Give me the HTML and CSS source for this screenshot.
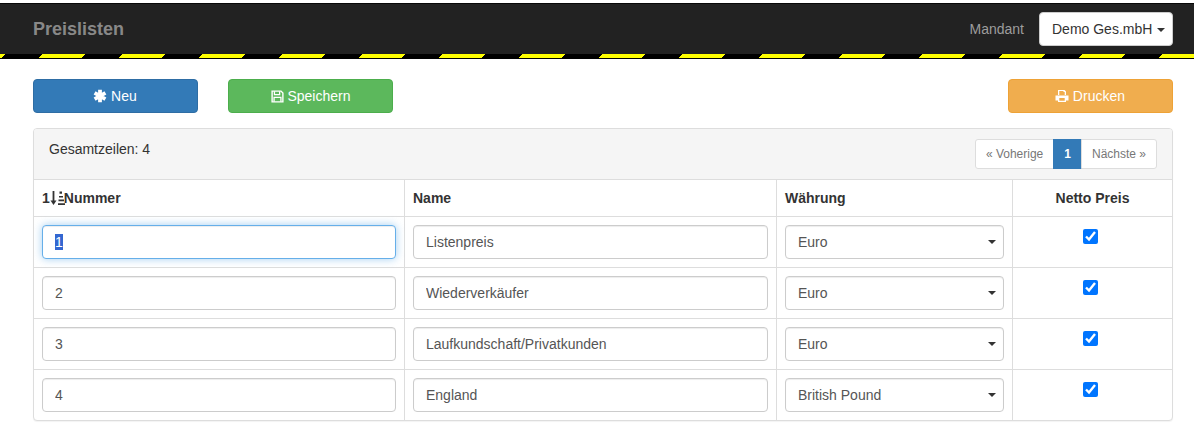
FILE: index.html
```html
<!DOCTYPE html>
<html>
	<head>
		<title>Preislisten</title>
		<meta charset="utf-8">
		<link rel="stylesheet" href="styles.css">
	</head>
	<body>
		<div class="topnav">
			<div class="topnav-inner">
				<span class="brand">Preislisten</span>
				<span class="mandant">Mandant</span>
				<button class="dropdown">Demo Ges.mbH <span class="caret"></span></button>
			</div>
			<div class="stripes"></div>
		</div>

		<div class="content">
			<div class="actions">
				<button class="btn btn-blue">
					<svg class="icon icon-wide" viewBox="0 0 14 14"><path fill="none" stroke="currentColor" stroke-width="3.8" d="M7 0.800v12.400M1.600 3.900l10.800 6.200M1.600 10.100l10.800-6.200"/></svg>
					Neu
				</button>
				<button class="btn btn-green">
					<svg class="icon" viewBox="0 0 14 14"><path fill="none" stroke="currentColor" stroke-width="1.5" d="M1.200 1.200h9.600l2 2v9.600H1.200z"/><path fill="none" stroke="currentColor" stroke-width="1.4" d="M3.700 1.400v3.500h5.600V1.400M3.300 12.600V8h7.400v4.600"/></svg>
					Speichern
				</button>
				<button class="btn btn-orange">
					<svg class="icon icon-wide" viewBox="0 0 14 14"><path fill="currentColor" d="M3 1h6.500L11 2.500V6H9.700V3H8.500V2H4.300v4H3zM0.500 6.500h13v5H11V13H3v-1.500H0.500zM4.300 9v2.800h5.400V9z"/></svg>
					Drucken
				</button>
			</div>

			<div class="panel">
				<div class="panel-heading">
					<span class="total">Gesamtzeilen: 4</span>
					<div class="pagination">
						<a href="#">« Voherige</a>
						<a href="#" class="active">1</a>
						<a href="#">Nächste »</a>
					</div>
				</div>
				<table class="grid">
					<colgroup>
						<col class="col-nummer">
						<col class="col-name">
						<col class="col-waehrung">
						<col class="col-netto">
					</colgroup>
					<tr>
						<th>
							<span class="sorted">1<svg class="sort-icon" viewBox="0 0 15 14"><path fill="none" stroke="currentColor" stroke-width="1.8" d="M3.500 0v11"/><path fill="currentColor" d="M0.500 9.500h6L3.500 14z"/><path fill="currentColor" d="M9.500 0.500h2.500v2.200H9.500zM9 5h4v1.600H9zM8.500 8.600h5.500v1.600H8.500zM8 12.200h7V14H8z"/></svg>Nummer</span>
						</th>
						<th>Name</th>
						<th>Währung</th>
						<th class="center">Netto Preis</th>
					</tr>
					<tr>
						<td><input class="field" type="text" value="1" autofocus onfocus="this.select()"></td>
						<td><input class="field" type="text" value="Listenpreis"></td>
						<td><div class="select-wrap"><select class="field"><option>Euro</option></select></div></td>
						<td class="center"><input class="check" type="checkbox" checked></td>
					</tr>
					<tr>
						<td><input class="field" type="text" value="2"></td>
						<td><input class="field" type="text" value="Wiederverkäufer"></td>
						<td><div class="select-wrap"><select class="field"><option>Euro</option></select></div></td>
						<td class="center"><input class="check" type="checkbox" checked></td>
					</tr>
					<tr>
						<td><input class="field" type="text" value="3"></td>
						<td><input class="field" type="text" value="Laufkundschaft/Privatkunden"></td>
						<td><div class="select-wrap"><select class="field"><option>Euro</option></select></div></td>
						<td class="center"><input class="check" type="checkbox" checked></td>
					</tr>
					<tr>
						<td><input class="field" type="text" value="4"></td>
						<td><input class="field" type="text" value="England"></td>
						<td><div class="select-wrap"><select class="field"><option>British Pound</option></select></div></td>
						<td class="center"><input class="check" type="checkbox" checked></td>
					</tr>
				</table>
			</div>
		</div>
	</body>
</html>
```
FILE: styles.css
```css
* {
	box-sizing: border-box;
}

html, body {
	height: 100%;
}

body {
	margin: 0;
	padding-top: 3px;
	background-color: #fff;
	color: #333;
	font-family: "Liberation Sans", Arial, sans-serif;
	font-size: 14px;
	line-height: 20px;
	overflow: hidden;
}

.topnav {
	background-color: #222;
	border-top: 1px solid #080808;
}

.topnav-inner {
	display: flex;
	align-items: center;
	height: 50px;
	padding: 0 21px 0 33px;
}

.brand {
	margin-right: auto;
	color: #888;
	font-size: 18px;
	font-weight: bold;
}

.mandant {
	margin-right: 15px;
	color: #9d9d9d;
}

.dropdown {
	width: 134px;
	height: 34px;
	padding: 0 12px;
	background-color: #fff;
	border: 1px solid #ccc;
	border-radius: 4px;
	color: #333;
	font: inherit;
	text-align: left;
	white-space: nowrap;
}

.caret {
	display: inline-block;
	margin-left: 1px;
	vertical-align: middle;
	border-top: 4px solid #333;
	border-left: 4px solid transparent;
	border-right: 4px solid transparent;
}

.stripes {
	height: 5px;
	border-bottom: 1px solid #000;
	background-color: #000;
	background-image: repeating-linear-gradient(135deg, #ff0 0, #ff0 3.54px, #000 3.54px, #000 29.7px, #ff0 29.7px, #ff0 56.57px);
}

.content {
	padding: 20px 21px 0 33px;
}

.actions {
	display: flex;
	gap: 30px;
	margin-bottom: 15px;
}

.btn {
	width: 165px;
	height: 34px;
	padding: 0;
	border: 1px solid;
	border-radius: 4px;
	color: #fff;
	font: inherit;
}

.btn-blue {
	background-color: #337ab7;
	border-color: #2e6da4;
}

.btn-green {
	background-color: #5cb85c;
	border-color: #4cae4c;
}

.btn-orange {
	margin-left: auto;
	background-color: #f0ad4e;
	border-color: #eea236;
}

.icon {
	width: 13px;
	height: 13px;
	vertical-align: -2px;
}

.icon-wide {
	width: 14px;
	height: 14px;
	margin-left: -1px;
}

.panel {
	background-color: #fff;
	border: 1px solid #ddd;
	border-radius: 4px;
	box-shadow: 0 1px 1px rgba(0,0,0,.05);
	overflow: hidden;
}

.panel-heading {
	display: flex;
	justify-content: space-between;
	height: 51px;
	padding: 10px 15px;
	background-color: #f5f5f5;
	border-bottom: 1px solid #ddd;
}

.pagination {
	display: flex;
	height: 30px;
	font-size: 12px;
	line-height: 28px;
}

.pagination a {
	padding: 0 10px;
	background-color: #fff;
	border: 1px solid #ddd;
	margin-left: -1px;
	color: #777;
	text-decoration: none;
}

.pagination a:first-child {
	border-radius: 3px 0 0 3px;
}

.pagination a:last-child {
	border-radius: 0 3px 3px 0;
}

.pagination a.active {
	background-color: #337ab7;
	border-color: #337ab7;
	color: #fff;
	font-weight: bold;
}

.grid {
	width: 100%;
	table-layout: fixed;
	border-collapse: separate;
	border-spacing: 0;
}

.col-nummer {
	width: 371px;
}

.col-name {
	width: 372px;
}

.col-waehrung {
	width: 236px;
}

.grid th {
	height: 37px;
	padding: 8px;
	border-right: 1px solid #ddd;
	border-bottom: 1px solid #ddd;
	text-align: left;
}

.grid td {
	height: 51px;
	padding: 8px;
	border-right: 1px solid #ddd;
	border-bottom: 1px solid #ddd;
	vertical-align: top;
}

.grid tr > :last-child {
	border-right: 0;
}

.grid tr:last-child td {
	height: 50px;
	border-bottom: 0;
}

.grid .center {
	text-align: center;
}

.sorted {
	display: inline-flex;
	align-items: center;
}

.sort-icon {
	width: 15px;
	height: 14px;
	margin-right: -1px;
}

.field {
	display: block;
	width: 100%;
	height: 34px;
	padding: 6px 12px;
	background-color: #fff;
	border: 1px solid #ccc;
	border-radius: 4px;
	box-shadow: inset 0 1px 1px rgba(0,0,0,.075);
	color: #555;
	font: inherit;
	appearance: none;
}

.field:focus {
	border-color: #66afe9;
	outline: 0;
	box-shadow: inset 0 1px 1px rgba(0,0,0,.075), 0 0 8px rgba(102,175,233,.6);
}

.select-wrap {
	position: relative;
}

.select-wrap::after {
	content: "";
	position: absolute;
	top: 15px;
	right: 8px;
	border-top: 4px solid #333;
	border-left: 4px solid transparent;
	border-right: 4px solid transparent;
}

.check {
	width: 15px;
	height: 15px;
	margin: 4px 4px 0 0;
}
```
